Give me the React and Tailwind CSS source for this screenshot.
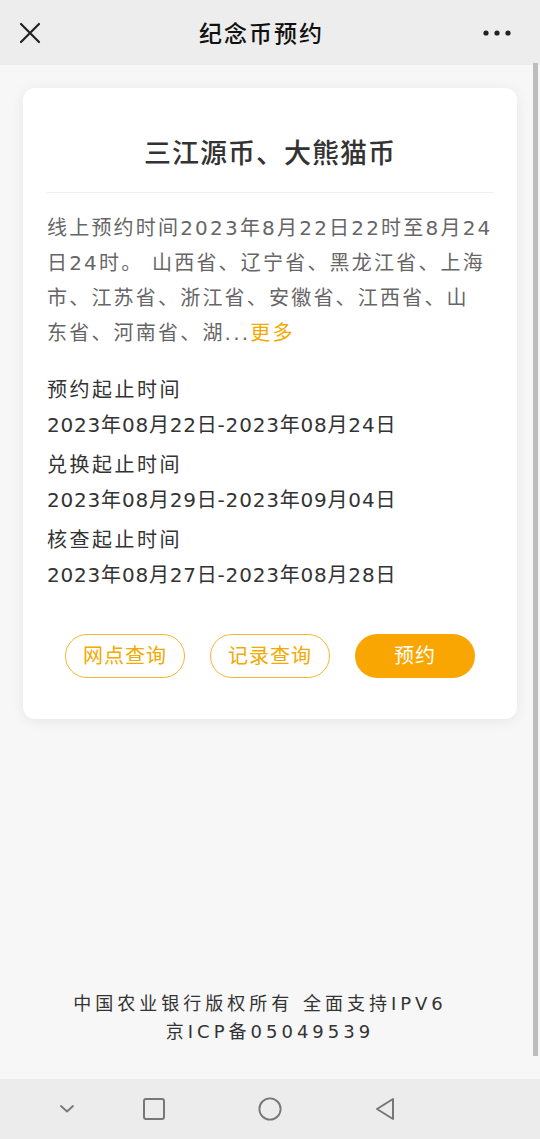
import React from 'react';

const FONT = { fontFamily: '"DejaVu Sans", "Noto Sans CJK SC", sans-serif' };

const periods = [
  { label: "预约起止时间", value: "2023年08月22日-2023年08月24日" },
  { label: "兑换起止时间", value: "2023年08月29日-2023年09月04日" },
  { label: "核查起止时间", value: "2023年08月27日-2023年08月28日" },
];

const TopBar = () => (
  <div className="h-[65px] shrink-0 bg-[#ededed] flex items-center justify-between px-[19px]">
    <svg width="22" height="22" viewBox="0 0 22 22">
      <path d="M2 2 L20 20 M20 2 L2 20" stroke="#222" strokeWidth="2.2" strokeLinecap="round" />
    </svg>
    <h1 className="text-[23px] tracking-[2px] font-medium text-[#111]" style={{ fontFamily: '"Noto Sans CJK SC", sans-serif' }}>
      纪念币预约
    </h1>
    <svg width="30" height="8" viewBox="0 0 30 8" className="mr-[9px]">
      <circle cx="4" cy="4" r="2.6" fill="#222" />
      <circle cx="15" cy="4" r="2.6" fill="#222" />
      <circle cx="26" cy="4" r="2.6" fill="#222" />
    </svg>
  </div>
);

const NavBar = () => (
  <div className="h-[60px] shrink-0 bg-[#ececec] flex items-center">
    <div className="ml-[55px] w-[24px] flex justify-center">
      <svg width="18" height="10" viewBox="0 0 18 10">
        <path d="M3 2 L9 7.5 L15 2" stroke="#777" strokeWidth="1.8" fill="none" strokeLinecap="round" />
      </svg>
    </div>
    <div className="ml-[63px] w-[24px] flex justify-center">
      <svg width="24" height="24" viewBox="0 0 24 24">
        <rect x="2" y="2" width="20" height="20" rx="2" stroke="#777" strokeWidth="2" fill="none" />
      </svg>
    </div>
    <div className="ml-[92px] w-[24px] flex justify-center">
      <svg width="26" height="26" viewBox="0 0 26 26">
        <circle cx="13" cy="13" r="11.5" stroke="#777" strokeWidth="2" fill="none" />
      </svg>
    </div>
    <div className="ml-[91px] w-[24px] flex justify-center">
      <svg width="24" height="26" viewBox="0 0 24 26">
        <path d="M20 3 L20 23 L4 13 Z" stroke="#777" strokeWidth="2" fill="none" strokeLinejoin="round" />
      </svg>
    </div>
  </div>
);

const App = () => {
  return (
    <div className="h-screen w-full flex flex-col bg-[#f7f7f7]" style={FONT}>
      <TopBar />

      <main className="relative flex-1 flex flex-col px-[23px] pt-[23px]">
        {/* scrollbar */}
        <div className="absolute right-[2px] top-[-2px] bottom-[23px] w-[5px] bg-[#bdbdbd]" />

        <div className="bg-white rounded-[12px] shadow-[0_2px_14px_rgba(0,0,0,0.07)] px-[24px] pt-[44px] pb-[41px]">
          <h2
            className="text-center text-[27px] leading-[40px] tracking-[1px] text-[#333] font-medium"
            style={{ fontFamily: '"Noto Sans CJK SC", sans-serif' }}
          >
            三江源币、大熊猫币
          </h2>
          <div className="mt-[20px] h-px bg-[#eeeeee]" />

          <p className="mt-[18px] text-[20px] leading-[35px] tracking-[2.2px] text-[#666] whitespace-nowrap">
            线上预约时间2023年8月22日22时至8月24<br />
            日24时。 山西省、辽宁省、黑龙江省、上海<br />
            市、江苏省、浙江省、安徽省、江西省、山<br />
            东省、河南省、湖...<span className="text-[#f2a900]">更多</span>
          </p>

          <div className="mt-[22px] flex flex-col gap-[5px]">
            {periods.map((p, i) => (
              <div key={i} className="text-[20px] leading-[35px] text-[#333]">
                <div className="tracking-[2.5px]">{p.label}</div>
                <div className="tracking-[0.8px]">{p.value}</div>
              </div>
            ))}
          </div>

          <div className="mt-[41px] flex justify-center gap-[25px]">
            <button className="w-[120px] h-[44px] rounded-full border-[1.5px] border-[#f3b72e] text-[#f2a900] text-[20px] tracking-[1px]">
              网点查询
            </button>
            <button className="w-[120px] h-[44px] rounded-full border-[1.5px] border-[#f3b72e] text-[#f2a900] text-[20px] tracking-[1px]">
              记录查询
            </button>
            <button className="w-[120px] h-[44px] rounded-full bg-[#f9a602] text-white text-[20px] tracking-[1px]">
              预约
            </button>
          </div>
        </div>

        <footer className="mt-auto pb-[33px] text-center text-[18px] leading-[28px] tracking-[4px] text-[#333]">
          <div className="pr-[20px]">中国农业银行版权所有 全面支持IPV6</div>
          <div>京ICP备05049539</div>
        </footer>
      </main>

      <NavBar />
    </div>
  );
};

export default App;
